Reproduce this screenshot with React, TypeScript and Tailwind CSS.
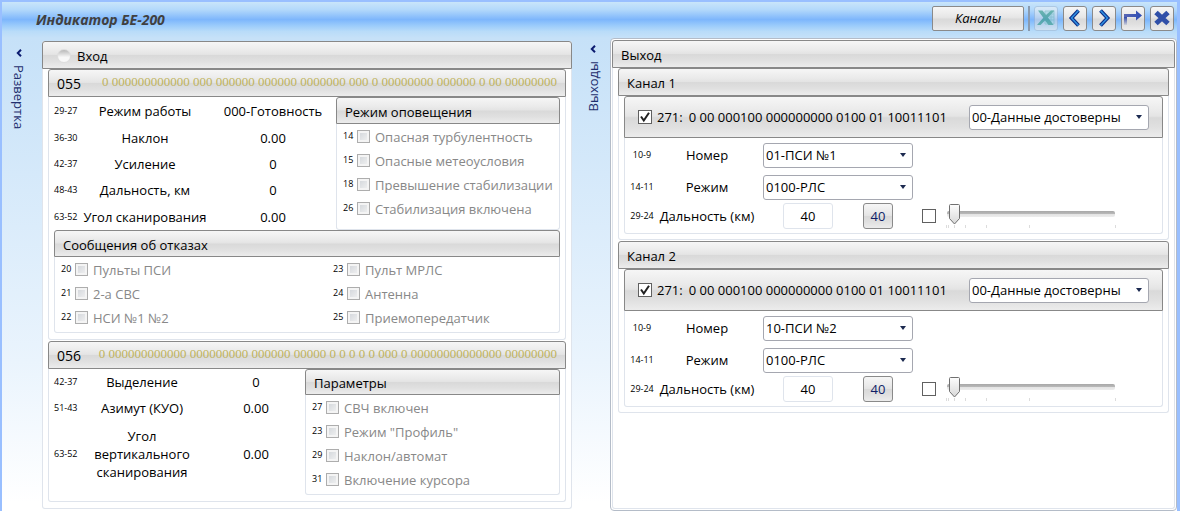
import { useId, useState } from "react";
import type { ReactNode } from "react";

const headerFill =
  "bg-[linear-gradient(to_bottom,#f6f6f6_0%,#eaeaea_35%,#e4e4e4_48%,#d9d9d9_52%,#e0e0e0_75%,#ececec_100%)]";

type GroupProps = {
  header: ReactNode;
  headerClass?: string;
  bodyClass?: string;
  className?: string;
  children?: ReactNode;
};

function Group({ header, headerClass = "h-7 px-2 pt-[2px]", bodyClass = "", className = "", children }: GroupProps) {
  return (
    <section className={`flex min-w-0 flex-col ${className}`}>
      <header
        className={`flex shrink-0 items-center rounded-t-[3px] border border-[#888888] ${headerFill} ${headerClass}`}
      >
        {header}
      </header>
      <div className={`grow rounded-b-[3px] border border-t-0 border-[#dfe4ec] ${bodyClass}`}>{children}</div>
    </section>
  );
}

function Flag({ bit, label }: { bit: number; label: string }) {
  const id = useId();
  return (
    <div className="flex h-6 items-center">
      <span className="w-[14px] shrink-0 text-[9px]">{bit}</span>
      <input
        id={id}
        type="checkbox"
        disabled
        className="size-[13px] shrink-0 appearance-none border border-[#adadad] bg-[linear-gradient(135deg,#cfd3d8,#f4f4f4)] shadow-[inset_0_0_0_2px_#f4f4f4]"
      />
      <label htmlFor={id} className="pt-px pl-[5px] whitespace-nowrap text-[#888888]">
        {label}
      </label>
    </div>
  );
}

function Word({ number, bits }: { number: string; bits: string }) {
  return (
    <>
      <span className="text-[14px]">{number}</span>
      <span className="ml-auto pb-1 font-['Liberation_Serif',serif] text-[13px] whitespace-pre text-[#bfb35c]">
        {bits}
      </span>
    </>
  );
}

function Field({ range, label, value }: { range: string; label: string; value: string }) {
  return (
    <>
      <span className="text-[9px]">{range}</span>
      <span className="text-center">{label}</span>
      <output className="pl-[5px] text-center">{value}</output>
    </>
  );
}

function Select({ label, options, className }: { label: string; options: string[]; className: string }) {
  return (
    <div className={`relative ${className}`}>
      <select
        aria-label={label}
        className="block h-[25px] w-full appearance-none rounded-[3px] border border-[#a5a7b0] bg-white pr-5 pl-[2px] text-black"
      >
        {options.map((option) => (
          <option key={option}>{option}</option>
        ))}
      </select>
      <svg className="pointer-events-none absolute top-[10px] right-[7px]" width="6" height="4" viewBox="0 0 6 4">
        <path d="M0 0h6L3 4z" fill="#1c2a50" />
      </svg>
    </div>
  );
}

function Tick({ label, checked = false, text }: { label: string; checked?: boolean; text?: string }) {
  const id = useId();
  return (
    <span className="flex shrink-0 items-center">
      <span className="relative size-[14px]">
        <input
          id={id}
          type="checkbox"
          defaultChecked={checked}
          aria-label={text ? undefined : label}
          className="peer block size-[14px] appearance-none border border-[#606060] bg-white"
        />
        <svg
          className="pointer-events-none invisible absolute inset-0 peer-checked:visible"
          width="14"
          height="14"
          viewBox="0 0 14 14"
        >
          <path d="M3 6.5 5.8 10.5 11 2.8" fill="none" stroke="#202020" strokeWidth="2" />
        </svg>
      </span>
      {text && (
        <label htmlFor={id} className="pl-[5px]">
          {text}
        </label>
      )}
    </span>
  );
}

const marks = [0, 2, 8, 19, 40, 83, 169];

function Slider() {
  const [value, setValue] = useState(8);
  return (
    <div className="relative h-[26px] w-[172px]">
      <svg width="172" height="26" viewBox="0 0 172 26">
        <defs>
          <linearGradient id="track" x1="0" y1="0" x2="0" y2="1">
            <stop offset="0" stopColor="#a8a8a8" />
            <stop offset="0.45" stopColor="#b8b8b8" />
            <stop offset="0.5" stopColor="#e2e2e2" />
            <stop offset="1" stopColor="#ededed" />
          </linearGradient>
          <linearGradient id="thumb" x1="0" y1="0" x2="0" y2="1">
            <stop offset="0" stopColor="#fdfdfd" />
            <stop offset="1" stopColor="#d8d8d8" />
          </linearGradient>
        </defs>
        <rect x="1" y="8" width="168" height="6" rx="2" fill="url(#track)" />
        {marks.map((mark) => (
          <path key={mark} d={`M${mark + 0.5} 22v3`} stroke="#dcdcdc" />
        ))}
        <path
          d={`M${value - 4.5} 2.5q0-1 1-1h8q1 0 1 1v13l-5 5.5-5-5.5z`}
          fill="url(#thumb)"
          stroke="#707070"
        />
      </svg>
      <input
        type="range"
        aria-label="Дальность"
        min={8}
        max={164}
        value={value}
        onChange={(event) => setValue(Number(event.target.value))}
        className="absolute inset-0 w-full opacity-0"
      />
    </div>
  );
}

function Channel({ title, source }: { title: string; source: string }) {
  const id = useId();
  return (
    <Group header={title} bodyClass="px-[5px] pb-[5px]">
      <Group
        headerClass="h-[42px] pl-[13px] pr-[13px]"
        bodyClass="pt-px pb-1"
        header={
          <>
            <Tick label="271" text="271:" checked />
            <span className="pl-[6px] whitespace-nowrap">0 00 000100 000000000 0100 01 10011101</span>
            <Select label="Достоверность" options={["00-Данные достоверны"]} className="ml-auto w-[180px] shrink-0" />
          </>
        }
      >
        <div className="flex h-8 items-center">
          <span className="w-[34px] text-center text-[9px]">10-9</span>
          <span className="mr-2 w-24 text-center">Номер</span>
          <Select label="Номер" options={[source]} className="w-[150px]" />
        </div>
        <div className="flex h-8 items-center">
          <span className="w-[34px] text-center text-[9px]">14-11</span>
          <span className="mr-2 w-24 text-center">Режим</span>
          <Select label="Режим" options={["0100-РЛС"]} className="w-[150px]" />
        </div>
        <div className="flex items-center">
          <span className="w-[34px] text-center text-[9px]">29-24</span>
          <label htmlFor={id} className="w-24 text-center whitespace-nowrap">
            Дальность (км)
          </label>
          <input
            id={id}
            defaultValue="40"
            className="ml-7 h-[26px] w-[50px] rounded-[3px] border border-[#dfe4ec] bg-white text-center"
          />
          <button
            type="button"
            className={`mr-[29px] ml-[30px] h-[26px] w-[30px] rounded-[3px] border border-[#8a8a8a] text-[#0f1d66] ${headerFill}`}
          >
            40
          </button>
          <Tick label="Плавная дальность" />
          <span className="pl-[10px]">
            <Slider />
          </span>
        </div>
      </Group>
    </Group>
  );
}

function ToolButton({ label, disabled = false, children }: { label: string; disabled?: boolean; children: ReactNode }) {
  return (
    <button
      type="button"
      aria-label={label}
      disabled={disabled}
      className={`flex h-[25px] w-6 items-center justify-center rounded-[3px] border border-[#8a8a8a] disabled:border-[#9fb4cc] disabled:opacity-50 ${headerFill}`}
    >
      {children}
    </button>
  );
}

function Collapse({ label, flip = false }: { label: string; flip?: boolean }) {
  return (
    <div className="flex flex-col items-center">
      <button type="button" className="flex flex-col items-center text-[#1f2f6e]">
        <svg width="6" height="8" viewBox="0 0 6 8">
          <path d="M5 0.8 1.8 4 5 7.2" fill="none" stroke="#0c1c70" strokeWidth="2" />
        </svg>
        <span className={`mt-2 leading-[18px] [writing-mode:vertical-rl] ${flip ? "rotate-180" : ""}`}>{label}</span>
      </button>
    </div>
  );
}

export default function App() {
  return (
    <main className="flex min-h-screen flex-col overflow-hidden border-t-2 border-r-[3px] border-l-2 border-[#99bfff] bg-[linear-gradient(to_bottom,#c6e1f8_0px,#c6e1f8_36px,#eaf4fd_360px,#ffffff_500px)] font-['Open_Sans','Noto_Sans',sans-serif] text-[13px] leading-[18px] text-black">
      <header className="flex h-9 items-center bg-[linear-gradient(to_bottom,#c9e5fa_0%,#b2d8fb_22%,#7db6fc_49%,#9acbfb_65%,#b9dcf9_82%,#c6e1f8_100%)] pr-[3px] pb-1 pl-[34px]">
        <h1 className="pt-1 text-[14px] font-bold text-[#404040] italic">Индикатор БЕ-200</h1>
        <button
          type="button"
          className={`ml-auto h-[25px] w-[92px] rounded-[2px] border border-[#8a8a8a] italic ${headerFill}`}
        >
          Каналы
        </button>
        <span className="mx-1 h-[25px] w-[2px] bg-[#8a9bb0]" />
        <div className="flex gap-[5px]">
          <ToolButton label="Экспорт в Excel" disabled>
            <svg className="shrink-0" width="18" height="18" viewBox="0 0 18 18">
              <path d="M8 2h9v13H8z" fill="#c4e4d8" stroke="#8cc4b0" />
              <path d="M12 5h5M12 8h5M12 11h5M14 2v13" stroke="#8cc4b0" />
              <path d="M1 1.5h4.5l3.5 4.5L14 1.5h3.5L11 8.5l5.5 7.5h-5L8 11.5 3.5 16H0l6.3-7.2z" fill="#2a9468" />
            </svg>
          </ToolButton>
          <ToolButton label="Назад">
            <svg width="16" height="18" viewBox="0 0 16 18">
              <path d="M11.5 1.5 4.5 9l7 7.5" fill="none" stroke="#0b2c86" strokeWidth="3.8" />
              <path d="M11.5 1.5 4.5 9l7 7.5" fill="none" stroke="#2f8fe0" strokeWidth="1.6" />
            </svg>
          </ToolButton>
          <ToolButton label="Вперёд">
            <svg width="16" height="18" viewBox="0 0 16 18">
              <path d="M4.5 1.5 11.5 9l-7 7.5" fill="none" stroke="#0b2c86" strokeWidth="3.8" />
              <path d="M4.5 1.5 11.5 9l-7 7.5" fill="none" stroke="#2f8fe0" strokeWidth="1.6" />
            </svg>
          </ToolButton>
          <ToolButton label="Перейти">
            <svg className="shrink-0" width="20" height="18" viewBox="0 0 20 18">
              <defs>
                <linearGradient id="stem" x1="0" y1="0" x2="0" y2="1">
                  <stop offset="0" stopColor="#3049a8" />
                  <stop offset="1" stopColor="#3049a8" stopOpacity="0.1" />
                </linearGradient>
                <linearGradient id="shaft" x1="0" y1="0" x2="1" y2="0">
                  <stop offset="0" stopColor="#5a68b4" />
                  <stop offset="1" stopColor="#2c4cb4" />
                </linearGradient>
              </defs>
              <path d="M1 8h3v8H1z" fill="url(#stem)" />
              <path d="M1 5h12V1.5l6 5-6 5V8H1z" fill="url(#shaft)" />
            </svg>
          </ToolButton>
          <ToolButton label="Закрыть">
            <svg className="shrink-0" width="18" height="18" viewBox="0 0 18 18">
              <path d="M3 3.5 15 14.5M15 3.5 3 14.5" stroke="#2f4fa8" strokeWidth="5" />
            </svg>
          </ToolButton>
        </div>
      </header>

      <div className="grid grow grid-cols-[40px_minmax(0,530fr)_38px_minmax(0,567fr)]">
        <div className="pt-[11px] pr-[7px]">
          <Collapse label="Развертка" />
        </div>

        <div className="pt-[3px]">
          <Group
            className="rounded-[3px] bg-white"
            bodyClass="flex flex-col gap-[1px] px-[5px] pb-[6px]"
            headerClass="h-7 pl-[14px] pt-[2px]"
            header={
              <>
                <span className="mr-[6px] size-[14px] rounded-full border border-[#dedede] bg-[linear-gradient(to_bottom,#b8b8b8,#f8f8f8_60%)]" />
                Вход
              </>
            }
          >
            <Group
              bodyClass="px-[5px] pb-[6px]"
              header={
                <Word
                  number="055"
                  bits="0 000000000000 000 000000 000000 0000000 000 0 00000000 000000 0 00 00000000"
                />
              }
            >
              <div className="flex gap-[3px]">
                <div className="grid h-[133px] grow grid-cols-[28px_126px_1fr] items-center pt-px">
                  <Field range="29-27" label="Режим работы" value="000-Готовность" />
                  <Field range="36-30" label="Наклон" value="0.00" />
                  <Field range="42-37" label="Усиление" value="0" />
                  <Field range="48-43" label="Дальность, км" value="0" />
                  <Field range="63-52" label="Угол сканирования" value="0.00" />
                </div>
                <Group
                  className="w-[224px] shrink-0"
                  headerClass="h-[27px] px-2 pt-[2px]"
                  bodyClass="px-[6px] pb-2"
                  header="Режим оповещения"
                >
                  <Flag bit={14} label="Опасная турбулентность" />
                  <Flag bit={15} label="Опасные метеоусловия" />
                  <Flag bit={18} label="Превышение стабилизации" />
                  <Flag bit={26} label="Стабилизация включена" />
                </Group>
              </div>
              <Group
                headerClass="h-[27px] px-2 pt-[2px]"
                bodyClass="grid grid-flow-col grid-cols-[272px_1fr] grid-rows-3 px-[6px] pb-[3px]"
                header="Сообщения об отказах"
              >
                <Flag bit={20} label="Пульты ПСИ" />
                <Flag bit={21} label="2-а СВС" />
                <Flag bit={22} label="НСИ №1 №2" />
                <Flag bit={23} label="Пульт МРЛС" />
                <Flag bit={24} label="Антенна" />
                <Flag bit={25} label="Приемопередатчик" />
              </Group>
            </Group>

            <Group
              bodyClass="flex px-[5px] pb-[6px]"
              header={
                <Word
                  number="056"
                  bits="0 000000000000 000000000 000000 00000 0 0 0 0 0 000 0 00000000000000 00000000"
                />
              }
            >
              <div className="grid grow grid-cols-[28px_120px_1fr] grid-rows-[26px_26px_66px] items-center">
                <Field range="42-37" label="Выделение" value="0" />
                <Field range="51-43" label="Азимут (КУО)" value="0.00" />
                <Field range="63-52" label="Угол вертикального сканирования" value="0.00" />
              </div>
              <Group
                className="w-[255px] shrink-0"
                headerClass="h-[26px] px-2 pt-[2px]"
                bodyClass="px-[6px] pb-[3px]"
                header="Параметры"
              >
                <Flag bit={27} label="СВЧ включен" />
                <Flag bit={23} label='Режим "Профиль"' />
                <Flag bit={29} label="Наклон/автомат" />
                <Flag bit={31} label="Включение курсора" />
              </Group>
            </Group>
          </Group>
        </div>

        <div className="pt-[7px] pl-1">
          <Collapse label="Выходы" flip />
        </div>

        <div className="flex flex-col rounded-[4px] border border-[#b4bcc8] bg-white px-[1px] pt-[1px] pb-[1px]">
          <Group className="grow" header="Выход" bodyClass="px-[5px] pb-[6px]">
            <div className="flex flex-col gap-[1px]">
              <Channel title="Канал 1" source="01-ПСИ №1" />
              <Channel title="Канал 2" source="10-ПСИ №2" />
            </div>
          </Group>
        </div>
      </div>
    </main>
  );
}
